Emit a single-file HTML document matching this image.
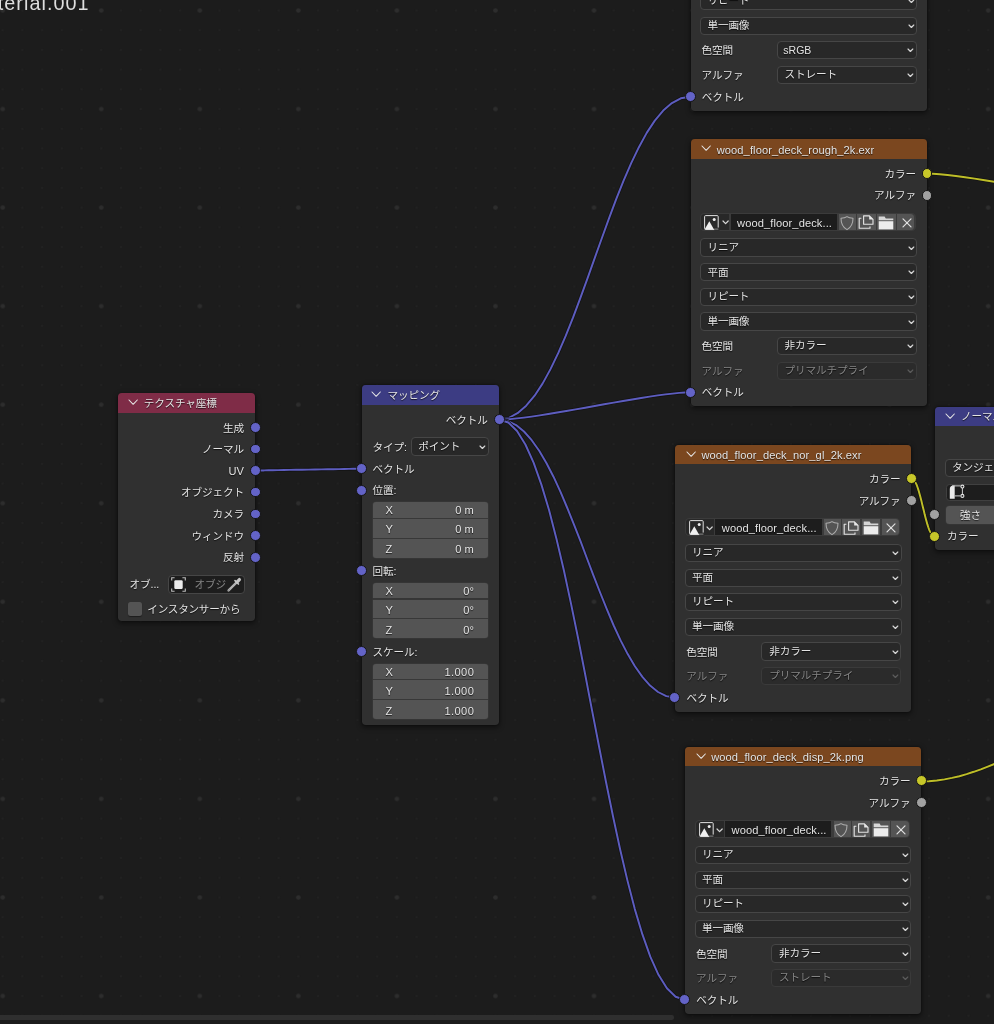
<!DOCTYPE html><html lang="ja"><head><meta charset="utf-8"><title>Shader Editor</title><style>
html,body{margin:0;padding:0}
body{width:994px;height:1024px;overflow:hidden;position:relative;background:#1c1c1c;
 font-family:"Liberation Sans","Noto Sans CJK JP",sans-serif;font-size:10.6px;color:#e4e4e4;
 text-shadow:0 1px 1px rgba(0,0,0,.75);letter-spacing:-.1px;-webkit-font-smoothing:antialiased}
.abs,.node,.hd,.t,.dd,.fld,.btn,.sock,.num{position:absolute;box-sizing:border-box}
.node{background:#303030;border-radius:3.8px;box-shadow:0 1.5px 5px 1px rgba(0,0,0,.42),0 0 1.5px rgba(0,0,0,.7)}
.hd{left:0;top:-.4px;right:0;border-radius:3.8px 3.8px 0 0}
.t{white-space:nowrap;line-height:16px;height:16px}
.r{text-align:right}
.lat{font-size:11.1px;letter-spacing:.1px;margin-top:.9px}
.dd{background:#282828;border:1px solid #464646;border-radius:4px}
.dd.dis{border-color:#3a3a3a;background:#2b2b2b}
.dd .t{left:5.6px}
.dim{color:#848484}
.fld{background:#1d1d1d;border:1px solid #3a3a3a;border-radius:3.5px}
.btn{background:#545454}
.num{background:#545454;box-shadow:0 0 0 .6px #3a3a3a}
.sock{width:10.9px;height:10.9px;border-radius:50%;border:1px solid #161616}
svg{position:absolute;left:0;top:0;overflow:visible}
#stage{position:absolute;left:0;top:0;width:994px;height:1024px;overflow:hidden;will-change:transform}
</style></head><body><div id="stage">
<svg width="994" height="1024" viewBox="0 0 994 1024"><defs><pattern id="gm" x="-105.71" y="-97.91" width="19.71" height="19.71" patternUnits="userSpaceOnUse"><circle cx="9.86" cy="9.86" r="1.1" fill="#222222"/></pattern><pattern id="gM" x="-145.12" y="-137.33" width="98.55" height="98.55" patternUnits="userSpaceOnUse"><circle cx="49.28" cy="49.28" r="2.3" fill="#2d2d2d"/></pattern></defs><rect width="994" height="1024" fill="url(#gm)"/><rect width="994" height="1024" fill="url(#gM)"/></svg>
<div class="t" style="left:-31.9px;top:-9.7px;font-size:19.8px;letter-spacing:1.06px;line-height:26px;height:26px;color:#dedede;text-shadow:none">Material.001</div>
<svg width="994" height="1024" viewBox="0 0 994 1024"><path d="M255.7 470.5 L256.5 470.5 L258.3 470.5 L260.9 470.4 L264.2 470.4 L268.3 470.3 L272.9 470.2 L278.1 470.1 L283.7 470.0 L289.6 469.9 L295.8 469.8 L302.2 469.7 L308.6 469.6 L315.0 469.5 L321.4 469.4 L327.6 469.3 L333.5 469.2 L339.1 469.1 L344.3 469.0 L348.9 468.9 L353.0 468.8 L356.3 468.8 L358.9 468.7 L360.7 468.7 L361.5 468.7" fill="none" stroke="#131313" stroke-width="3.5" stroke-linejoin="round"/><path d="M255.7 470.5 L256.5 470.5 L258.3 470.5 L260.9 470.4 L264.2 470.4 L268.3 470.3 L272.9 470.2 L278.1 470.1 L283.7 470.0 L289.6 469.9 L295.8 469.8 L302.2 469.7 L308.6 469.6 L315.0 469.5 L321.4 469.4 L327.6 469.3 L333.5 469.2 L339.1 469.1 L344.3 469.0 L348.9 468.9 L353.0 468.8 L356.3 468.8 L358.9 468.7 L360.7 468.7 L361.5 468.7" fill="none" stroke="#5d5dc0" stroke-width="1.95" stroke-linejoin="round"/><path d="M499.2 419.6 L508.6 418.0 L517.5 413.2 L526.2 405.7 L534.6 395.7 L542.7 383.4 L550.5 369.1 L558.2 353.2 L565.7 335.9 L573.1 317.4 L580.3 298.1 L587.5 278.3 L594.7 258.1 L601.9 238.0 L609.1 218.2 L616.3 198.9 L623.7 180.4 L631.2 163.1 L638.9 147.2 L646.7 132.9 L654.8 120.6 L663.2 110.6 L671.9 103.1 L680.8 98.3 L690.2 96.7" fill="none" stroke="#131313" stroke-width="3.5" stroke-linejoin="round"/><path d="M499.2 419.6 L508.6 418.0 L517.5 413.2 L526.2 405.7 L534.6 395.7 L542.7 383.4 L550.5 369.1 L558.2 353.2 L565.7 335.9 L573.1 317.4 L580.3 298.1 L587.5 278.3 L594.7 258.1 L601.9 238.0 L609.1 218.2 L616.3 198.9 L623.7 180.4 L631.2 163.1 L638.9 147.2 L646.7 132.9 L654.8 120.6 L663.2 110.6 L671.9 103.1 L680.8 98.3 L690.2 96.7" fill="none" stroke="#5d5dc0" stroke-width="1.95" stroke-linejoin="round"/><path d="M499.2 419.6 L504.3 419.5 L510.2 419.1 L516.8 418.4 L523.9 417.6 L531.6 416.6 L539.8 415.4 L548.3 414.0 L557.2 412.5 L566.3 411.0 L575.7 409.4 L585.2 407.7 L594.7 406.0 L604.2 404.3 L613.7 402.6 L623.1 401.0 L632.2 399.5 L641.1 398.0 L649.6 396.6 L657.8 395.4 L665.5 394.4 L672.6 393.6 L679.2 392.9 L685.1 392.5 L690.2 392.4" fill="none" stroke="#131313" stroke-width="3.5" stroke-linejoin="round"/><path d="M499.2 419.6 L504.3 419.5 L510.2 419.1 L516.8 418.4 L523.9 417.6 L531.6 416.6 L539.8 415.4 L548.3 414.0 L557.2 412.5 L566.3 411.0 L575.7 409.4 L585.2 407.7 L594.7 406.0 L604.2 404.3 L613.7 402.6 L623.1 401.0 L632.2 399.5 L641.1 398.0 L649.6 396.6 L657.8 395.4 L665.5 394.4 L672.6 393.6 L679.2 392.9 L685.1 392.5 L690.2 392.4" fill="none" stroke="#5d5dc0" stroke-width="1.95" stroke-linejoin="round"/><path d="M499.2 419.6 L507.8 421.0 L516.1 425.1 L524.0 431.5 L531.7 440.2 L539.2 450.8 L546.4 463.0 L553.5 476.7 L560.4 491.6 L567.1 507.5 L573.8 524.1 L580.5 541.2 L587.0 558.5 L593.6 575.9 L600.3 593.0 L607.0 609.6 L613.7 625.5 L620.6 640.4 L627.7 654.1 L634.9 666.3 L642.4 676.9 L650.1 685.6 L658.0 692.0 L666.3 696.1 L674.9 697.5" fill="none" stroke="#131313" stroke-width="3.5" stroke-linejoin="round"/><path d="M499.2 419.6 L507.8 421.0 L516.1 425.1 L524.0 431.5 L531.7 440.2 L539.2 450.8 L546.4 463.0 L553.5 476.7 L560.4 491.6 L567.1 507.5 L573.8 524.1 L580.5 541.2 L587.0 558.5 L593.6 575.9 L600.3 593.0 L607.0 609.6 L613.7 625.5 L620.6 640.4 L627.7 654.1 L634.9 666.3 L642.4 676.9 L650.1 685.6 L658.0 692.0 L666.3 696.1 L674.9 697.5" fill="none" stroke="#5d5dc0" stroke-width="1.95" stroke-linejoin="round"/><path d="M499.2 419.6 L508.3 422.5 L517.0 431.0 L525.4 444.5 L533.6 462.6 L541.4 484.6 L549.1 510.2 L556.5 538.9 L563.8 570.0 L570.9 603.1 L578.0 637.8 L585.0 673.5 L591.9 709.6 L598.9 745.8 L605.9 781.5 L613.0 816.2 L620.1 849.3 L627.4 880.4 L634.8 909.1 L642.5 934.7 L650.3 956.7 L658.5 974.8 L666.9 988.3 L675.6 996.8 L684.7 999.7" fill="none" stroke="#131313" stroke-width="3.5" stroke-linejoin="round"/><path d="M499.2 419.6 L508.3 422.5 L517.0 431.0 L525.4 444.5 L533.6 462.6 L541.4 484.6 L549.1 510.2 L556.5 538.9 L563.8 570.0 L570.9 603.1 L578.0 637.8 L585.0 673.5 L591.9 709.6 L598.9 745.8 L605.9 781.5 L613.0 816.2 L620.1 849.3 L627.4 880.4 L634.8 909.1 L642.5 934.7 L650.3 956.7 L658.5 974.8 L666.9 988.3 L675.6 996.8 L684.7 999.7" fill="none" stroke="#5d5dc0" stroke-width="1.95" stroke-linejoin="round"/><path d="M911.6 478.8 L912.7 479.1 L913.8 479.9 L914.8 481.3 L915.8 483.1 L916.8 485.2 L917.7 487.8 L918.6 490.6 L919.5 493.7 L920.4 497.0 L921.3 500.4 L922.1 503.9 L923.0 507.5 L923.9 511.1 L924.7 514.6 L925.6 518.0 L926.5 521.3 L927.4 524.4 L928.3 527.2 L929.2 529.8 L930.2 531.9 L931.2 533.7 L932.2 535.1 L933.3 535.9 L934.4 536.2" fill="none" stroke="#131313" stroke-width="3.5" stroke-linejoin="round"/><path d="M911.6 478.8 L912.7 479.1 L913.8 479.9 L914.8 481.3 L915.8 483.1 L916.8 485.2 L917.7 487.8 L918.6 490.6 L919.5 493.7 L920.4 497.0 L921.3 500.4 L922.1 503.9 L923.0 507.5 L923.9 511.1 L924.7 514.6 L925.6 518.0 L926.5 521.3 L927.4 524.4 L928.3 527.2 L929.2 529.8 L930.2 531.9 L931.2 533.7 L932.2 535.1 L933.3 535.9 L934.4 536.2" fill="none" stroke="#bebe28" stroke-width="1.95" stroke-linejoin="round"/><path d="M926.8 173.6 L932.9 173.8 L939.8 174.2 L947.5 175.0 L955.9 176.0 L965.0 177.2 L974.6 178.6 L984.7 180.2 L995.1 181.9 L1005.9 183.7 L1017.0 185.6 L1028.1 187.6 L1039.4 189.6 L1050.7 191.6 L1061.8 193.6 L1072.9 195.5 L1083.7 197.3 L1094.1 199.0 L1104.2 200.6 L1113.8 202.0 L1122.9 203.2 L1131.3 204.2 L1139.0 205.0 L1145.9 205.4 L1152.0 205.6" fill="none" stroke="#131313" stroke-width="3.5" stroke-linejoin="round"/><path d="M926.8 173.6 L932.9 173.8 L939.8 174.2 L947.5 175.0 L955.9 176.0 L965.0 177.2 L974.6 178.6 L984.7 180.2 L995.1 181.9 L1005.9 183.7 L1017.0 185.6 L1028.1 187.6 L1039.4 189.6 L1050.7 191.6 L1061.8 193.6 L1072.9 195.5 L1083.7 197.3 L1094.1 199.0 L1104.2 200.6 L1113.8 202.0 L1122.9 203.2 L1131.3 204.2 L1139.0 205.0 L1145.9 205.4 L1152.0 205.6" fill="none" stroke="#bebe28" stroke-width="1.95" stroke-linejoin="round"/><path d="M920.8 781.4 L928.9 781.2 L936.8 780.5 L944.5 779.4 L952.0 777.9 L959.4 776.2 L966.6 774.1 L973.7 771.8 L980.8 769.3 L987.8 766.6 L994.7 763.8 L1001.5 760.9 L1008.4 758.0 L1015.3 755.1 L1022.1 752.2 L1029.0 749.4 L1036.0 746.7 L1043.1 744.2 L1050.2 741.9 L1057.4 739.8 L1064.8 738.1 L1072.3 736.6 L1080.0 735.5 L1087.9 734.8 L1096.0 734.6" fill="none" stroke="#131313" stroke-width="3.5" stroke-linejoin="round"/><path d="M920.8 781.4 L928.9 781.2 L936.8 780.5 L944.5 779.4 L952.0 777.9 L959.4 776.2 L966.6 774.1 L973.7 771.8 L980.8 769.3 L987.8 766.6 L994.7 763.8 L1001.5 760.9 L1008.4 758.0 L1015.3 755.1 L1022.1 752.2 L1029.0 749.4 L1036.0 746.7 L1043.1 744.2 L1050.2 741.9 L1057.4 739.8 L1064.8 738.1 L1072.3 736.6 L1080.0 735.5 L1087.9 734.8 L1096.0 734.6" fill="none" stroke="#bebe28" stroke-width="1.95" stroke-linejoin="round"/></svg>
<div class="node" style="left:690.5px;top:-156.3px;width:236.3px;height:266.8px"><div class="dd" style="left:9.9px;top:148.1px;width:216.6px;height:18.2px"><div class="t " style="left:6.0px;top:-0.7px">リピート</div><svg class="abs" style="left:206.2px;top:6.3px" width="6.8" height="4.5" viewBox="0 0 6.8 4.5"><path d="M1.00 1.00 L3.40 3.50 L5.80 1.00" fill="none" stroke="#d8d8d8" stroke-width="1.15" stroke-linecap="round" stroke-linejoin="round"/></svg></div><div class="dd" style="left:9.9px;top:172.8px;width:216.6px;height:18.2px"><div class="t " style="left:6.0px;top:-0.7px">単一画像</div><svg class="abs" style="left:206.2px;top:6.3px" width="6.8" height="4.5" viewBox="0 0 6.8 4.5"><path d="M1.00 1.00 L3.40 3.50 L5.80 1.00" fill="none" stroke="#d8d8d8" stroke-width="1.15" stroke-linecap="round" stroke-linejoin="round"/></svg></div><div class="t " style="left:11.1px;top:198.5px;">色空間</div><div class="dd" style="left:86.0px;top:197.4px;width:140.3px;height:18.2px"><div class="t lat " style="left:5.8px;top:-1.1px;font-size:10.5px;letter-spacing:0">sRGB</div><svg class="abs" style="left:129.9px;top:6.3px" width="6.8" height="4.5" viewBox="0 0 6.8 4.5"><path d="M1.00 1.00 L3.40 3.50 L5.80 1.00" fill="none" stroke="#d8d8d8" stroke-width="1.15" stroke-linecap="round" stroke-linejoin="round"/></svg></div><div class="t " style="left:11.1px;top:223.2px;">アルファ</div><div class="dd" style="left:86.0px;top:222.1px;width:140.3px;height:18.2px"><div class="t " style="left:7.0px;top:-0.7px">ストレート</div><svg class="abs" style="left:129.9px;top:6.3px" width="6.8" height="4.5" viewBox="0 0 6.8 4.5"><path d="M1.00 1.00 L3.40 3.50 L5.80 1.00" fill="none" stroke="#d8d8d8" stroke-width="1.15" stroke-linecap="round" stroke-linejoin="round"/></svg></div><div class="t " style="left:11.3px;top:244.8px;">ベクトル</div><div class="sock" style="left:-5.8px;top:247.2px;background:#6363c7"></div></div>
<div class="node" style="left:690.5px;top:139.7px;width:236.3px;height:266.8px"><div class="hd" style="height:19.7px;background:#7b471f"></div><svg class="abs" style="left:10.5px;top:5.7px" width="10.3" height="6.3" viewBox="0 0 10.3 6.3"><path d="M1.00 1.00 L5.15 5.30 L9.30 1.00" fill="none" stroke="#e6e6e6" stroke-width="1.05" stroke-linecap="round" stroke-linejoin="round"/></svg><div class="t lat" style="left:26.2px;top:1.6px;">wood_floor_deck_rough_2k.exr</div><div class="t r " style="right:10.9px;top:26.4px;">カラー</div><div class="t r " style="right:10.9px;top:47.8px;">アルファ</div><div class="abs" style="left:9.6px;top:73.3px;width:215.6px;height:18.0px;border-radius:4.5px;background:#3b3b3b"></div><div class="abs" style="left:10.6px;top:74.3px;width:28px;height:15.9px;border-radius:3.5px 0 0 3.5px;background:#282828"></div><svg class="abs" style="left:13.6px;top:75.2px" width="15.5" height="15" viewBox="0 0 15.5 15"><rect x=".6" y=".6" width="13.6" height="13.8" rx="1" fill="#2a2a2a" stroke="#e0e0e0" stroke-width="1"/><path d="M.6 14.4 L5.3 6.2 L10 14.4 Z" fill="#f0f0f0"/><rect x="10.4" y="12.6" width="5" height="3" fill="#282828"/><rect x="10.4" y="13.6" width="4" height="1" fill="#8a8a8a"/><circle cx="10.2" cy="4.6" r="1.5" fill="#f0f0f0"/></svg><svg class="abs" style="left:31.0px;top:80.7px" width="7.2" height="4.7" viewBox="0 0 7.2 4.7"><path d="M1.00 1.00 L3.60 3.70 L6.20 1.00" fill="none" stroke="#d8d8d8" stroke-width="1.20" stroke-linecap="round" stroke-linejoin="round"/></svg><div class="abs" style="left:40.2px;top:74.3px;width:106.3px;height:15.9px;background:#1d1d1d"></div><div class="t lat" style="left:46.6px;top:74.4px;">wood_floor_deck...</div><div class="btn" style="left:148.5px;top:74.3px;width:17.1px;height:15.9px;border-radius:0"></div><div class="btn" style="left:166.9px;top:74.3px;width:18.2px;height:15.9px;border-radius:0"></div><div class="btn" style="left:186.5px;top:74.3px;width:18.5px;height:15.9px;border-radius:0"></div><div class="btn" style="left:206.4px;top:74.3px;width:17.6px;height:15.9px;border-radius:0 3.5px 3.5px 0"></div><svg class="abs" style="left:148.4px;top:75.1px" width="16" height="16" viewBox="0 0 16 16"><path d="M8 1.6 C6.2 3 4 3.2 2 3.2 C2 8.5 3.6 12.2 8 14.6 C12.4 12.2 14 8.5 14 3.2 C12 3.2 9.8 3 8 1.6 Z" fill="none" stroke="#adadad" stroke-width="1.05" stroke-linejoin="round"/></svg><svg class="abs" style="left:167.9px;top:74.5px" width="16" height="16" viewBox="0 0 16 16"><path d="M5.6 1.8 H11.4 L15 5.4 V10.2 H5.6 Z" fill="none" stroke="#e2e2e2" stroke-width="1.15" stroke-linejoin="round"/><path d="M11.2 1.6 V5.6 H15.2 Z" fill="#e8e8e8"/><path d="M3.4 4.2 H1.2 V14.2 H12 V12.4" fill="none" stroke="#e2e2e2" stroke-width="1.15" stroke-linejoin="round"/></svg><svg class="abs" style="left:187.9px;top:74.9px" width="16" height="16" viewBox="0 0 16 16"><path d="M.7 1.6 H6.6 L7.8 3.4 H15.3 V5.3 H.7 Z" fill="#d6d6d6"/><rect x=".7" y="6.2" width="14.6" height="8.2" fill="#ececec"/></svg><svg class="abs" style="left:208.0px;top:75.2px" width="16" height="16" viewBox="0 0 16 16"><path d="M4 3.9 L12 11.9 M12 3.9 L4 11.9" fill="none" stroke="#e0e0e0" stroke-width="1.2" stroke-linecap="round"/></svg><div class="dd" style="left:9.9px;top:98.8px;width:216.6px;height:18.2px"><div class="t " style="left:6.0px;top:-0.7px">リニア</div><svg class="abs" style="left:206.2px;top:6.3px" width="6.8" height="4.5" viewBox="0 0 6.8 4.5"><path d="M1.00 1.00 L3.40 3.50 L5.80 1.00" fill="none" stroke="#d8d8d8" stroke-width="1.15" stroke-linecap="round" stroke-linejoin="round"/></svg></div><div class="dd" style="left:9.9px;top:123.5px;width:216.6px;height:18.2px"><div class="t " style="left:6.0px;top:-0.7px">平面</div><svg class="abs" style="left:206.2px;top:6.3px" width="6.8" height="4.5" viewBox="0 0 6.8 4.5"><path d="M1.00 1.00 L3.40 3.50 L5.80 1.00" fill="none" stroke="#d8d8d8" stroke-width="1.15" stroke-linecap="round" stroke-linejoin="round"/></svg></div><div class="dd" style="left:9.9px;top:148.1px;width:216.6px;height:18.2px"><div class="t " style="left:6.0px;top:-0.7px">リピート</div><svg class="abs" style="left:206.2px;top:6.3px" width="6.8" height="4.5" viewBox="0 0 6.8 4.5"><path d="M1.00 1.00 L3.40 3.50 L5.80 1.00" fill="none" stroke="#d8d8d8" stroke-width="1.15" stroke-linecap="round" stroke-linejoin="round"/></svg></div><div class="dd" style="left:9.9px;top:172.8px;width:216.6px;height:18.2px"><div class="t " style="left:6.0px;top:-0.7px">単一画像</div><svg class="abs" style="left:206.2px;top:6.3px" width="6.8" height="4.5" viewBox="0 0 6.8 4.5"><path d="M1.00 1.00 L3.40 3.50 L5.80 1.00" fill="none" stroke="#d8d8d8" stroke-width="1.15" stroke-linecap="round" stroke-linejoin="round"/></svg></div><div class="t " style="left:11.1px;top:198.5px;">色空間</div><div class="dd" style="left:86.0px;top:197.4px;width:140.3px;height:18.2px"><div class="t " style="left:7.0px;top:-0.7px">非カラー</div><svg class="abs" style="left:129.9px;top:6.3px" width="6.8" height="4.5" viewBox="0 0 6.8 4.5"><path d="M1.00 1.00 L3.40 3.50 L5.80 1.00" fill="none" stroke="#d8d8d8" stroke-width="1.15" stroke-linecap="round" stroke-linejoin="round"/></svg></div><div class="t dim" style="left:11.1px;top:223.2px;">アルファ</div><div class="dd dis" style="left:86.0px;top:222.1px;width:140.3px;height:18.2px"><div class="t dim" style="left:7.0px;top:-0.7px">プリマルチプライ</div><svg class="abs" style="left:129.9px;top:6.3px" width="6.8" height="4.5" viewBox="0 0 6.8 4.5"><path d="M1.00 1.00 L3.40 3.50 L5.80 1.00" fill="none" stroke="#5c5c5c" stroke-width="1.15" stroke-linecap="round" stroke-linejoin="round"/></svg></div><div class="t " style="left:11.3px;top:244.8px;">ベクトル</div><div class="sock" style="left:231.0px;top:28.3px;background:#c7c729"></div><div class="sock" style="left:231.0px;top:50.2px;background:#a1a1a1"></div><div class="sock" style="left:-5.8px;top:247.2px;background:#6363c7"></div></div>
<div class="node" style="left:675.2px;top:445.0px;width:236.3px;height:266.8px"><div class="hd" style="height:19.7px;background:#7b471f"></div><svg class="abs" style="left:10.5px;top:5.7px" width="10.3" height="6.3" viewBox="0 0 10.3 6.3"><path d="M1.00 1.00 L5.15 5.30 L9.30 1.00" fill="none" stroke="#e6e6e6" stroke-width="1.05" stroke-linecap="round" stroke-linejoin="round"/></svg><div class="t lat" style="left:26.2px;top:1.6px;">wood_floor_deck_nor_gl_2k.exr</div><div class="t r " style="right:10.9px;top:26.4px;">カラー</div><div class="t r " style="right:10.9px;top:47.8px;">アルファ</div><div class="abs" style="left:9.6px;top:73.3px;width:215.6px;height:18.0px;border-radius:4.5px;background:#3b3b3b"></div><div class="abs" style="left:10.6px;top:74.3px;width:28px;height:15.9px;border-radius:3.5px 0 0 3.5px;background:#282828"></div><svg class="abs" style="left:13.6px;top:75.2px" width="15.5" height="15" viewBox="0 0 15.5 15"><rect x=".6" y=".6" width="13.6" height="13.8" rx="1" fill="#2a2a2a" stroke="#e0e0e0" stroke-width="1"/><path d="M.6 14.4 L5.3 6.2 L10 14.4 Z" fill="#f0f0f0"/><rect x="10.4" y="12.6" width="5" height="3" fill="#282828"/><rect x="10.4" y="13.6" width="4" height="1" fill="#8a8a8a"/><circle cx="10.2" cy="4.6" r="1.5" fill="#f0f0f0"/></svg><svg class="abs" style="left:31.0px;top:80.7px" width="7.2" height="4.7" viewBox="0 0 7.2 4.7"><path d="M1.00 1.00 L3.60 3.70 L6.20 1.00" fill="none" stroke="#d8d8d8" stroke-width="1.20" stroke-linecap="round" stroke-linejoin="round"/></svg><div class="abs" style="left:40.2px;top:74.3px;width:106.3px;height:15.9px;background:#1d1d1d"></div><div class="t lat" style="left:46.6px;top:74.4px;">wood_floor_deck...</div><div class="btn" style="left:148.5px;top:74.3px;width:17.1px;height:15.9px;border-radius:0"></div><div class="btn" style="left:166.9px;top:74.3px;width:18.2px;height:15.9px;border-radius:0"></div><div class="btn" style="left:186.5px;top:74.3px;width:18.5px;height:15.9px;border-radius:0"></div><div class="btn" style="left:206.4px;top:74.3px;width:17.6px;height:15.9px;border-radius:0 3.5px 3.5px 0"></div><svg class="abs" style="left:148.4px;top:75.1px" width="16" height="16" viewBox="0 0 16 16"><path d="M8 1.6 C6.2 3 4 3.2 2 3.2 C2 8.5 3.6 12.2 8 14.6 C12.4 12.2 14 8.5 14 3.2 C12 3.2 9.8 3 8 1.6 Z" fill="none" stroke="#adadad" stroke-width="1.05" stroke-linejoin="round"/></svg><svg class="abs" style="left:167.9px;top:74.5px" width="16" height="16" viewBox="0 0 16 16"><path d="M5.6 1.8 H11.4 L15 5.4 V10.2 H5.6 Z" fill="none" stroke="#e2e2e2" stroke-width="1.15" stroke-linejoin="round"/><path d="M11.2 1.6 V5.6 H15.2 Z" fill="#e8e8e8"/><path d="M3.4 4.2 H1.2 V14.2 H12 V12.4" fill="none" stroke="#e2e2e2" stroke-width="1.15" stroke-linejoin="round"/></svg><svg class="abs" style="left:187.9px;top:74.9px" width="16" height="16" viewBox="0 0 16 16"><path d="M.7 1.6 H6.6 L7.8 3.4 H15.3 V5.3 H.7 Z" fill="#d6d6d6"/><rect x=".7" y="6.2" width="14.6" height="8.2" fill="#ececec"/></svg><svg class="abs" style="left:208.0px;top:75.2px" width="16" height="16" viewBox="0 0 16 16"><path d="M4 3.9 L12 11.9 M12 3.9 L4 11.9" fill="none" stroke="#e0e0e0" stroke-width="1.2" stroke-linecap="round"/></svg><div class="dd" style="left:9.9px;top:98.8px;width:216.6px;height:18.2px"><div class="t " style="left:6.0px;top:-0.7px">リニア</div><svg class="abs" style="left:206.2px;top:6.3px" width="6.8" height="4.5" viewBox="0 0 6.8 4.5"><path d="M1.00 1.00 L3.40 3.50 L5.80 1.00" fill="none" stroke="#d8d8d8" stroke-width="1.15" stroke-linecap="round" stroke-linejoin="round"/></svg></div><div class="dd" style="left:9.9px;top:123.5px;width:216.6px;height:18.2px"><div class="t " style="left:6.0px;top:-0.7px">平面</div><svg class="abs" style="left:206.2px;top:6.3px" width="6.8" height="4.5" viewBox="0 0 6.8 4.5"><path d="M1.00 1.00 L3.40 3.50 L5.80 1.00" fill="none" stroke="#d8d8d8" stroke-width="1.15" stroke-linecap="round" stroke-linejoin="round"/></svg></div><div class="dd" style="left:9.9px;top:148.1px;width:216.6px;height:18.2px"><div class="t " style="left:6.0px;top:-0.7px">リピート</div><svg class="abs" style="left:206.2px;top:6.3px" width="6.8" height="4.5" viewBox="0 0 6.8 4.5"><path d="M1.00 1.00 L3.40 3.50 L5.80 1.00" fill="none" stroke="#d8d8d8" stroke-width="1.15" stroke-linecap="round" stroke-linejoin="round"/></svg></div><div class="dd" style="left:9.9px;top:172.8px;width:216.6px;height:18.2px"><div class="t " style="left:6.0px;top:-0.7px">単一画像</div><svg class="abs" style="left:206.2px;top:6.3px" width="6.8" height="4.5" viewBox="0 0 6.8 4.5"><path d="M1.00 1.00 L3.40 3.50 L5.80 1.00" fill="none" stroke="#d8d8d8" stroke-width="1.15" stroke-linecap="round" stroke-linejoin="round"/></svg></div><div class="t " style="left:11.1px;top:198.5px;">色空間</div><div class="dd" style="left:86.0px;top:197.4px;width:140.3px;height:18.2px"><div class="t " style="left:7.0px;top:-0.7px">非カラー</div><svg class="abs" style="left:129.9px;top:6.3px" width="6.8" height="4.5" viewBox="0 0 6.8 4.5"><path d="M1.00 1.00 L3.40 3.50 L5.80 1.00" fill="none" stroke="#d8d8d8" stroke-width="1.15" stroke-linecap="round" stroke-linejoin="round"/></svg></div><div class="t dim" style="left:11.1px;top:223.2px;">アルファ</div><div class="dd dis" style="left:86.0px;top:222.1px;width:140.3px;height:18.2px"><div class="t dim" style="left:7.0px;top:-0.7px">プリマルチプライ</div><svg class="abs" style="left:129.9px;top:6.3px" width="6.8" height="4.5" viewBox="0 0 6.8 4.5"><path d="M1.00 1.00 L3.40 3.50 L5.80 1.00" fill="none" stroke="#5c5c5c" stroke-width="1.15" stroke-linecap="round" stroke-linejoin="round"/></svg></div><div class="t " style="left:11.3px;top:244.8px;">ベクトル</div><div class="sock" style="left:231.0px;top:28.3px;background:#c7c729"></div><div class="sock" style="left:231.0px;top:50.2px;background:#a1a1a1"></div><div class="sock" style="left:-5.8px;top:247.2px;background:#6363c7"></div></div>
<div class="node" style="left:685.0px;top:747.0px;width:236.3px;height:266.8px"><div class="hd" style="height:19.7px;background:#7b471f"></div><svg class="abs" style="left:10.5px;top:5.7px" width="10.3" height="6.3" viewBox="0 0 10.3 6.3"><path d="M1.00 1.00 L5.15 5.30 L9.30 1.00" fill="none" stroke="#e6e6e6" stroke-width="1.05" stroke-linecap="round" stroke-linejoin="round"/></svg><div class="t lat" style="left:26.2px;top:1.6px;">wood_floor_deck_disp_2k.png</div><div class="t r " style="right:10.9px;top:26.4px;">カラー</div><div class="t r " style="right:10.9px;top:47.8px;">アルファ</div><div class="abs" style="left:9.6px;top:73.3px;width:215.6px;height:18.0px;border-radius:4.5px;background:#3b3b3b"></div><div class="abs" style="left:10.6px;top:74.3px;width:28px;height:15.9px;border-radius:3.5px 0 0 3.5px;background:#282828"></div><svg class="abs" style="left:13.6px;top:75.2px" width="15.5" height="15" viewBox="0 0 15.5 15"><rect x=".6" y=".6" width="13.6" height="13.8" rx="1" fill="#2a2a2a" stroke="#e0e0e0" stroke-width="1"/><path d="M.6 14.4 L5.3 6.2 L10 14.4 Z" fill="#f0f0f0"/><rect x="10.4" y="12.6" width="5" height="3" fill="#282828"/><rect x="10.4" y="13.6" width="4" height="1" fill="#8a8a8a"/><circle cx="10.2" cy="4.6" r="1.5" fill="#f0f0f0"/></svg><svg class="abs" style="left:31.0px;top:80.7px" width="7.2" height="4.7" viewBox="0 0 7.2 4.7"><path d="M1.00 1.00 L3.60 3.70 L6.20 1.00" fill="none" stroke="#d8d8d8" stroke-width="1.20" stroke-linecap="round" stroke-linejoin="round"/></svg><div class="abs" style="left:40.2px;top:74.3px;width:106.3px;height:15.9px;background:#1d1d1d"></div><div class="t lat" style="left:46.6px;top:74.4px;">wood_floor_deck...</div><div class="btn" style="left:148.5px;top:74.3px;width:17.1px;height:15.9px;border-radius:0"></div><div class="btn" style="left:166.9px;top:74.3px;width:18.2px;height:15.9px;border-radius:0"></div><div class="btn" style="left:186.5px;top:74.3px;width:18.5px;height:15.9px;border-radius:0"></div><div class="btn" style="left:206.4px;top:74.3px;width:17.6px;height:15.9px;border-radius:0 3.5px 3.5px 0"></div><svg class="abs" style="left:148.4px;top:75.1px" width="16" height="16" viewBox="0 0 16 16"><path d="M8 1.6 C6.2 3 4 3.2 2 3.2 C2 8.5 3.6 12.2 8 14.6 C12.4 12.2 14 8.5 14 3.2 C12 3.2 9.8 3 8 1.6 Z" fill="none" stroke="#adadad" stroke-width="1.05" stroke-linejoin="round"/></svg><svg class="abs" style="left:167.9px;top:74.5px" width="16" height="16" viewBox="0 0 16 16"><path d="M5.6 1.8 H11.4 L15 5.4 V10.2 H5.6 Z" fill="none" stroke="#e2e2e2" stroke-width="1.15" stroke-linejoin="round"/><path d="M11.2 1.6 V5.6 H15.2 Z" fill="#e8e8e8"/><path d="M3.4 4.2 H1.2 V14.2 H12 V12.4" fill="none" stroke="#e2e2e2" stroke-width="1.15" stroke-linejoin="round"/></svg><svg class="abs" style="left:187.9px;top:74.9px" width="16" height="16" viewBox="0 0 16 16"><path d="M.7 1.6 H6.6 L7.8 3.4 H15.3 V5.3 H.7 Z" fill="#d6d6d6"/><rect x=".7" y="6.2" width="14.6" height="8.2" fill="#ececec"/></svg><svg class="abs" style="left:208.0px;top:75.2px" width="16" height="16" viewBox="0 0 16 16"><path d="M4 3.9 L12 11.9 M12 3.9 L4 11.9" fill="none" stroke="#e0e0e0" stroke-width="1.2" stroke-linecap="round"/></svg><div class="dd" style="left:9.9px;top:98.8px;width:216.6px;height:18.2px"><div class="t " style="left:6.0px;top:-0.7px">リニア</div><svg class="abs" style="left:206.2px;top:6.3px" width="6.8" height="4.5" viewBox="0 0 6.8 4.5"><path d="M1.00 1.00 L3.40 3.50 L5.80 1.00" fill="none" stroke="#d8d8d8" stroke-width="1.15" stroke-linecap="round" stroke-linejoin="round"/></svg></div><div class="dd" style="left:9.9px;top:123.5px;width:216.6px;height:18.2px"><div class="t " style="left:6.0px;top:-0.7px">平面</div><svg class="abs" style="left:206.2px;top:6.3px" width="6.8" height="4.5" viewBox="0 0 6.8 4.5"><path d="M1.00 1.00 L3.40 3.50 L5.80 1.00" fill="none" stroke="#d8d8d8" stroke-width="1.15" stroke-linecap="round" stroke-linejoin="round"/></svg></div><div class="dd" style="left:9.9px;top:148.1px;width:216.6px;height:18.2px"><div class="t " style="left:6.0px;top:-0.7px">リピート</div><svg class="abs" style="left:206.2px;top:6.3px" width="6.8" height="4.5" viewBox="0 0 6.8 4.5"><path d="M1.00 1.00 L3.40 3.50 L5.80 1.00" fill="none" stroke="#d8d8d8" stroke-width="1.15" stroke-linecap="round" stroke-linejoin="round"/></svg></div><div class="dd" style="left:9.9px;top:172.8px;width:216.6px;height:18.2px"><div class="t " style="left:6.0px;top:-0.7px">単一画像</div><svg class="abs" style="left:206.2px;top:6.3px" width="6.8" height="4.5" viewBox="0 0 6.8 4.5"><path d="M1.00 1.00 L3.40 3.50 L5.80 1.00" fill="none" stroke="#d8d8d8" stroke-width="1.15" stroke-linecap="round" stroke-linejoin="round"/></svg></div><div class="t " style="left:11.1px;top:198.5px;">色空間</div><div class="dd" style="left:86.0px;top:197.4px;width:140.3px;height:18.2px"><div class="t " style="left:7.0px;top:-0.7px">非カラー</div><svg class="abs" style="left:129.9px;top:6.3px" width="6.8" height="4.5" viewBox="0 0 6.8 4.5"><path d="M1.00 1.00 L3.40 3.50 L5.80 1.00" fill="none" stroke="#d8d8d8" stroke-width="1.15" stroke-linecap="round" stroke-linejoin="round"/></svg></div><div class="t dim" style="left:11.1px;top:223.2px;">アルファ</div><div class="dd dis" style="left:86.0px;top:222.1px;width:140.3px;height:18.2px"><div class="t dim" style="left:7.0px;top:-0.7px">ストレート</div><svg class="abs" style="left:129.9px;top:6.3px" width="6.8" height="4.5" viewBox="0 0 6.8 4.5"><path d="M1.00 1.00 L3.40 3.50 L5.80 1.00" fill="none" stroke="#5c5c5c" stroke-width="1.15" stroke-linecap="round" stroke-linejoin="round"/></svg></div><div class="t " style="left:11.3px;top:244.8px;">ベクトル</div><div class="sock" style="left:231.0px;top:28.3px;background:#c7c729"></div><div class="sock" style="left:231.0px;top:50.2px;background:#a1a1a1"></div><div class="sock" style="left:-5.8px;top:247.2px;background:#6363c7"></div></div>
<div class="node" style="left:118.0px;top:393.5px;width:137.0px;height:227.0px"><div class="hd" style="height:19.6px;background:#7f2c47"></div><svg class="abs" style="left:9.6px;top:5.7px" width="10.3" height="6.3" viewBox="0 0 10.3 6.3"><path d="M1.00 1.00 L5.15 5.30 L9.30 1.00" fill="none" stroke="#e6e6e6" stroke-width="1.05" stroke-linecap="round" stroke-linejoin="round"/></svg><div class="t " style="left:25.8px;top:1.3px;">テクスチャ座標</div><div class="t r " style="right:11.0px;top:26.2px;">生成</div><div class="sock" style="left:132.2px;top:28.8px;background:#6363c7"></div><div class="t r " style="right:11.0px;top:47.5px;">ノーマル</div><div class="sock" style="left:132.2px;top:50.0px;background:#6363c7"></div><div class="t r lat" style="right:11.0px;top:69.0px;">UV</div><div class="sock" style="left:132.2px;top:71.5px;background:#6363c7"></div><div class="t r " style="right:11.0px;top:90.5px;">オブジェクト</div><div class="sock" style="left:132.2px;top:93.0px;background:#6363c7"></div><div class="t r " style="right:11.0px;top:112.5px;">カメラ</div><div class="sock" style="left:132.2px;top:115.0px;background:#6363c7"></div><div class="t r " style="right:11.0px;top:134.1px;">ウィンドウ</div><div class="sock" style="left:132.2px;top:136.7px;background:#6363c7"></div><div class="t r " style="right:11.0px;top:155.7px;">反射</div><div class="sock" style="left:132.2px;top:158.2px;background:#6363c7"></div><div class="t " style="left:11.6px;top:182.6px;">オブ...</div><div class="fld" style="left:49.6px;top:181.8px;width:77.6px;height:19px;border-color:#464646;border-radius:4px"></div><svg class="abs" style="left:53.4px;top:183.2px" width="15" height="15" viewBox="0 0 15 15"><path d="M.7 3.6 V.7 H3.6 M11.4 .7 H14.3 V3.6 M14.3 11.4 V14.3 H11.4 M3.6 14.3 H.7 V11.4" fill="none" stroke="#bcbcbc" stroke-width="1.1"/><rect x="3.3" y="3.3" width="8.4" height="8.6" rx="1.2" fill="#ececec"/></svg><div class="t dim" style="left:76.6px;top:182.6px;width:31px;overflow:hidden;text-shadow:none">オブジ</div><svg class="abs" style="left:108.6px;top:183.6px" width="15" height="15" viewBox="0 0 15 15"><path d="M1.6 13.4 L9.4 5.6" fill="none" stroke="#b2b2b2" stroke-width="2.3" stroke-linecap="round"/><path d="M1.2 13.9 L2.6 12.4" fill="none" stroke="#9a9a9a" stroke-width="1.2" stroke-linecap="round"/><path d="M8 3.6 L11.4 7" fill="none" stroke="#c6c6c6" stroke-width="1.7" stroke-linecap="round"/><path d="M10.2 4.8 L12.4 2.6" fill="none" stroke="#c6c6c6" stroke-width="3.3" stroke-linecap="round"/></svg><div class="abs" style="left:10.2px;top:208.7px;width:13.6px;height:13.8px;border-radius:2.5px;background:#545454;box-shadow:0 1px 1px rgba(0,0,0,.4)"></div><div class="t " style="left:29.3px;top:207.8px;letter-spacing:-.24px">インスタンサーから</div></div>
<div class="node" style="left:361.7px;top:385.2px;width:137.4px;height:339.6px"><div class="hd" style="height:20.1px;background:#3c3c83"></div><svg class="abs" style="left:9.8px;top:5.8px" width="10.3" height="6.3" viewBox="0 0 10.3 6.3"><path d="M1.00 1.00 L5.15 5.30 L9.30 1.00" fill="none" stroke="#e6e6e6" stroke-width="1.05" stroke-linecap="round" stroke-linejoin="round"/></svg><div class="t " style="left:25.8px;top:1.7px;">マッピング</div><div class="t r " style="right:11.4px;top:26.4px;">ベクトル</div><div class="sock" style="left:132.1px;top:28.9px;background:#6363c7"></div><div class="t " style="left:10.9px;top:53.4px;">タイプ:</div><div class="dd" style="left:49.4px;top:52.2px;width:77.8px;height:18.2px"><div class="t " style="left:6.1px;top:-0.7px">ポイント</div><svg class="abs" style="left:67.4px;top:6.3px" width="6.8" height="4.5" viewBox="0 0 6.8 4.5"><path d="M1.00 1.00 L3.40 3.50 L5.80 1.00" fill="none" stroke="#d8d8d8" stroke-width="1.15" stroke-linecap="round" stroke-linejoin="round"/></svg></div><div class="t " style="left:10.9px;top:75.5px;">ベクトル</div><div class="sock" style="left:-5.7px;top:78.0px;background:#6363c7"></div><div class="t " style="left:10.9px;top:97.1px;">位置:</div><div class="sock" style="left:-5.7px;top:99.6px;background:#6363c7"></div><div class="num" style="left:10.9px;top:116.6px;width:115.4px;height:15.9px;border-radius:3px 3px 0 0"><div class="t lat" style="left:13.0px;top:0.2px;margin-top:0">X</div><div class="t r lat" style="right:14.0px;top:0.2px;margin-top:0;letter-spacing:.1px">0 m</div></div><div class="num" style="left:10.9px;top:133.9px;width:115.4px;height:18.6px;border-radius:0"><div class="t lat" style="left:13.0px;top:2.2px;margin-top:0">Y</div><div class="t r lat" style="right:14.0px;top:2.2px;margin-top:0;letter-spacing:.1px">0 m</div></div><div class="num" style="left:10.9px;top:153.9px;width:115.4px;height:19.1px;border-radius:0 0 3px 3px"><div class="t lat" style="left:13.0px;top:1.9px;margin-top:0">Z</div><div class="t r lat" style="right:14.0px;top:1.9px;margin-top:0;letter-spacing:.1px">0 m</div></div><div class="t " style="left:10.9px;top:177.6px;">回転:</div><div class="sock" style="left:-5.7px;top:180.2px;background:#6363c7"></div><div class="num" style="left:10.9px;top:197.7px;width:115.4px;height:15.3px;border-radius:3px 3px 0 0"><div class="t lat" style="left:13.0px;top:0.2px;margin-top:0">X</div><div class="t r lat" style="right:14.0px;top:0.2px;margin-top:0;letter-spacing:.1px">0°</div></div><div class="num" style="left:10.9px;top:214.4px;width:115.4px;height:18.4px;border-radius:0"><div class="t lat" style="left:13.0px;top:2.8px;margin-top:0">Y</div><div class="t r lat" style="right:14.0px;top:2.8px;margin-top:0;letter-spacing:.1px">0°</div></div><div class="num" style="left:10.9px;top:234.2px;width:115.4px;height:18.8px;border-radius:0 0 3px 3px"><div class="t lat" style="left:13.0px;top:2.7px;margin-top:0">Z</div><div class="t r lat" style="right:14.0px;top:2.7px;margin-top:0;letter-spacing:.1px">0°</div></div><div class="t " style="left:10.9px;top:258.5px;">スケール:</div><div class="sock" style="left:-5.7px;top:261.1px;background:#6363c7"></div><div class="num" style="left:10.9px;top:278.7px;width:115.4px;height:15.0px;border-radius:3px 3px 0 0"><div class="t lat" style="left:13.0px;top:0.2px;margin-top:0">X</div><div class="t r lat" style="right:13.7px;top:0.2px;margin-top:0;letter-spacing:.42px">1.000</div></div><div class="num" style="left:10.9px;top:295.1px;width:115.4px;height:18.8px;border-radius:0"><div class="t lat" style="left:13.0px;top:3.1px;margin-top:0">Y</div><div class="t r lat" style="right:13.7px;top:3.1px;margin-top:0;letter-spacing:.42px">1.000</div></div><div class="num" style="left:10.9px;top:315.3px;width:115.4px;height:18.8px;border-radius:0 0 3px 3px"><div class="t lat" style="left:13.0px;top:2.6px;margin-top:0">Z</div><div class="t r lat" style="right:13.7px;top:2.6px;margin-top:0;letter-spacing:.42px">1.000</div></div></div>
<div class="node" style="left:935.0px;top:407.0px;width:150.0px;height:142.8px"><div class="hd" style="height:19.6px;background:#3c3c83"></div><svg class="abs" style="left:9.8px;top:5.7px" width="10.3" height="6.3" viewBox="0 0 10.3 6.3"><path d="M1.00 1.00 L5.15 5.30 L9.30 1.00" fill="none" stroke="#e6e6e6" stroke-width="1.05" stroke-linecap="round" stroke-linejoin="round"/></svg><div class="t " style="left:26.0px;top:1.0px;">ノーマルマップ</div><div class="dd" style="left:10.4px;top:51.7px;width:130.0px;height:18.2px"><div class="t " style="left:5.6px;top:-0.7px">タンジェント空間</div><svg class="abs" style="left:119.6px;top:6.3px" width="6.8" height="4.5" viewBox="0 0 6.8 4.5"><path d="M1.00 1.00 L3.40 3.50 L5.80 1.00" fill="none" stroke="#d8d8d8" stroke-width="1.15" stroke-linecap="round" stroke-linejoin="round"/></svg></div><div class="fld" style="left:10.6px;top:76.7px;width:130px;height:17.8px;border-color:#404040"></div><svg class="abs" style="left:13.5px;top:78px" width="17" height="15" viewBox="0 0 17 15"><path d="M.8 4 C.8 1.6 2 .4 4.4 .4 H5.7 V13.8 H.8 Z" fill="#ebebeb"/><path d="M3 .9 H11.6 M13.4 3.2 V9 M5.6 10.9 H11.5" fill="none" stroke="#cfcfcf" stroke-width="1"/><circle cx="13.4" cy="1.6" r="1.5" fill="#1d1d1d" stroke="#e4e4e4" stroke-width="1.1"/><circle cx="13.4" cy="10.9" r="1.5" fill="#1d1d1d" stroke="#e4e4e4" stroke-width="1.1"/></svg><div class="num" style="left:11.2px;top:99.2px;width:130px;height:18.2px;border-radius:3.5px"></div><div class="t " style="left:25.0px;top:100.0px;">強さ</div><div class="t " style="left:12.0px;top:121.2px;">カラー</div><div class="sock" style="left:-5.8px;top:102.3px;background:#a1a1a1"></div><div class="sock" style="left:-5.8px;top:124.0px;background:#c7c729"></div></div>
<div class="abs" style="left:-10px;top:1014.6px;width:683.5px;height:5.2px;border-radius:2.6px;background:#2f2f2f"></div>
</div></body></html>
